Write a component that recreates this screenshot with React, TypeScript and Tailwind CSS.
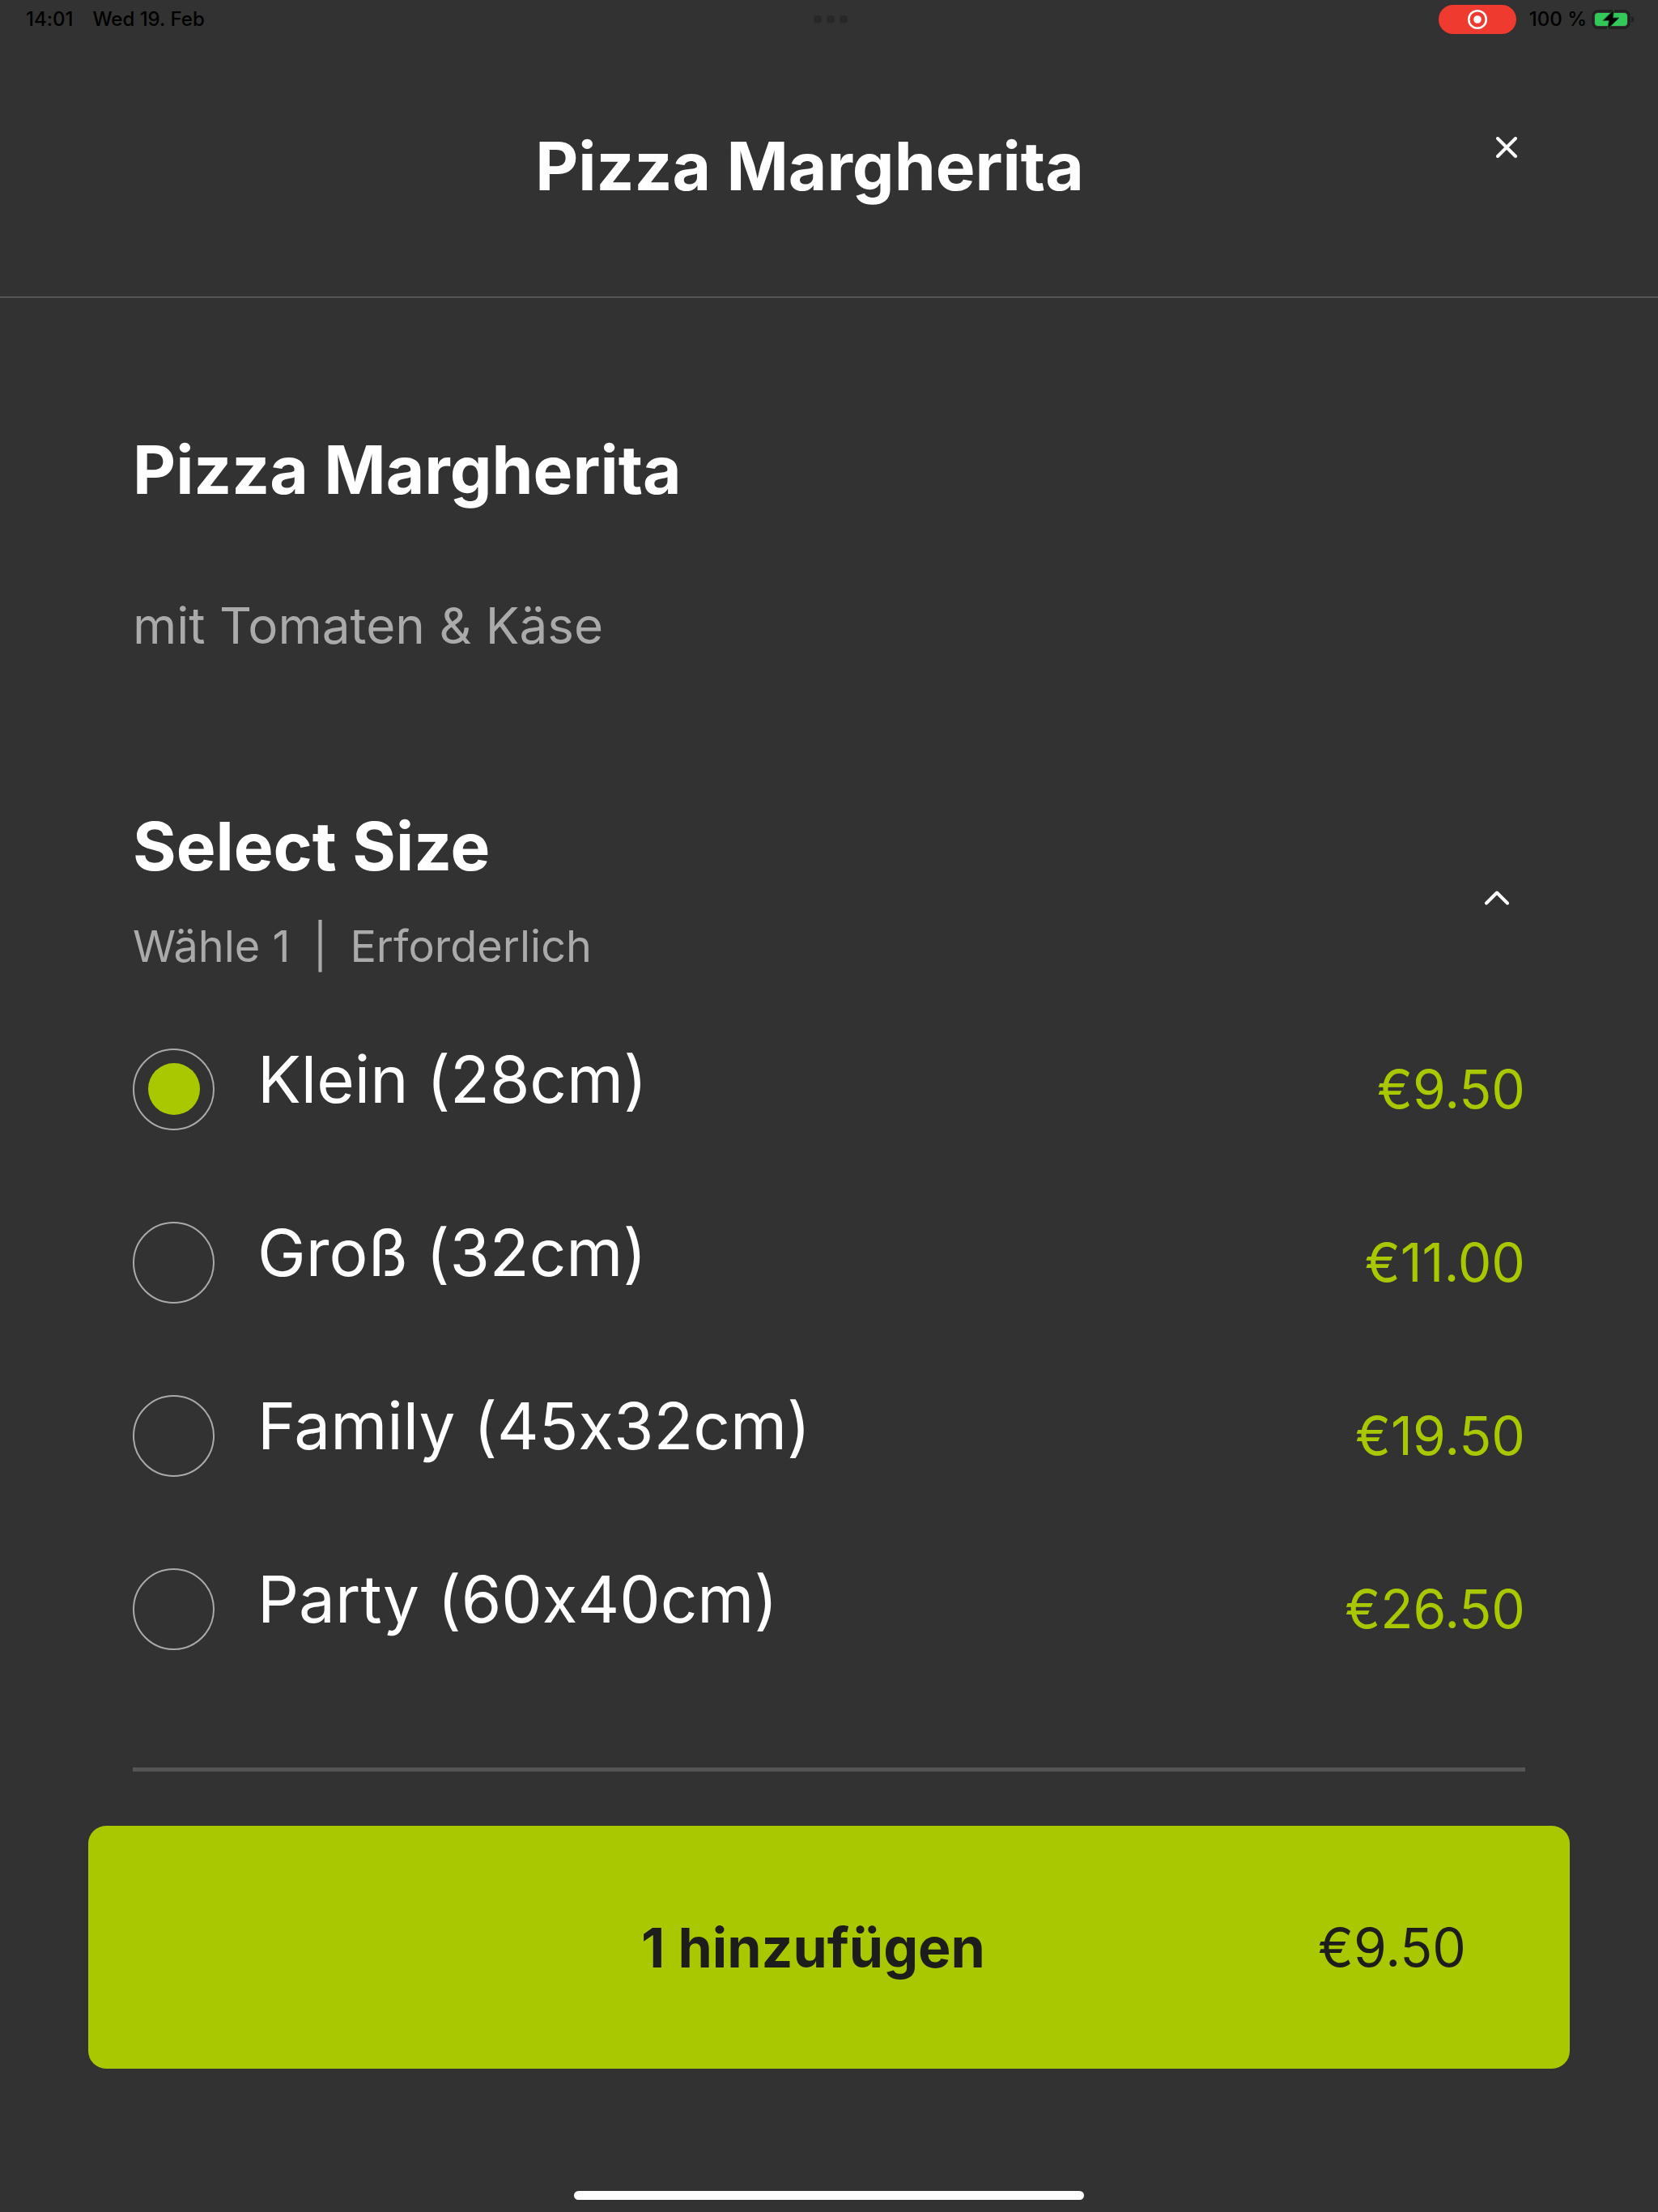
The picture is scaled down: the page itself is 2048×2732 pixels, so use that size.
import { useState } from 'react'

interface SizeOption {
  id: string
  label: string
  price: number
}

const sizes: SizeOption[] = [
  { id: 'small', label: 'Klein (28cm)', price: 9.5 },
  { id: 'large', label: 'Groß (32cm)', price: 11 },
  { id: 'family', label: 'Family (45x32cm)', price: 19.5 },
  { id: 'party', label: 'Party (60x40cm)', price: 26.5 },
]

const formatPrice = (value: number) => `€${value.toFixed(2)}`

function StatusBar() {
  return (
    <div className="grid h-12 grid-cols-[1fr_auto_1fr] items-center pr-7 pl-8 text-[24px] leading-8 font-medium text-black">
      <div className="flex gap-6">
        <span>14:01</span>
        <span>Wed 19. Feb</span>
      </div>
      <div className="flex justify-center gap-1.5">
        <span className="size-2.5 rounded-full bg-[#282828]" />
        <span className="size-2.5 rounded-full bg-[#282828]" />
        <span className="size-2.5 rounded-full bg-[#282828]" />
      </div>
      <div className="flex items-center justify-end">
        <span className="mr-4 flex h-9 w-24 items-center justify-center rounded-full bg-[#ee3a2f]">
          <svg viewBox="0 0 26 26" className="size-[26px]" aria-hidden="true">
            <circle cx="13" cy="13" r="10.8" fill="none" stroke="#fff" strokeWidth="2.6" />
            <circle cx="13" cy="13" r="4.8" fill="#fff" />
          </svg>
        </span>
        <span className="mr-1.5">100 %</span>
        <svg viewBox="0 0 54 26" className="h-[26px] w-[54px]" aria-hidden="true">
          <rect x="1.5" y="2.5" width="45" height="21" rx="6.5" fill="none" stroke="#1f1f1f" strokeWidth="2.4" />
          <rect x="4" y="5" width="40" height="16" rx="4" fill="#34c759" />
          <path d="M49 9.5c2.2.6 3.6 1.8 3.6 3.5s-1.4 2.9-3.6 3.5z" fill="#1f1f1f" />
          <path
            d="M27.5 1 14 14.5h7.5L19.5 25 34 11h-7.5z"
            fill="#000"
            stroke="#1f5c30"
            strokeWidth="1"
            strokeLinejoin="round"
          />
        </svg>
      </div>
    </div>
  )
}

export default function App() {
  const [selectedId, setSelectedId] = useState('small')
  const [open, setOpen] = useState(true)
  const selected = sizes.find((size) => size.id === selectedId) ?? sizes[0]

  return (
    <div className="flex min-h-screen flex-col bg-[#323232] font-['Inter',sans-serif] text-white [font-feature-settings:'calt'_0]">
      <StatusBar />

      <header className="flex items-start border-b-2 border-[#555] pt-[84px] pr-[137px] pb-[110px] pl-[189px]">
        <h1 className="flex-1 pt-6 text-center text-[82px] leading-[100px] font-bold">Pizza Margherita</h1>
        <button type="button" aria-label="Schließen" className="flex size-[100px] items-center justify-center">
          <svg viewBox="0 0 26 26" className="size-[26px]" fill="none" stroke="currentColor" strokeWidth="4" strokeLinecap="round">
            <path d="M2 2l22 22M24 2L2 24" />
          </svg>
        </button>
      </header>

      <main className="px-[164px] pt-[163px]">
        <h2 className="text-[82px] leading-[100px] font-bold">Pizza Margherita</h2>
        <p className="mt-[102px] text-[62px] leading-[80px] text-[#aaa]">mit Tomaten &amp; Käse</p>

        <section className="mt-[183px] border-b-[5px] border-[#555] pb-[134px]">
          <button
            type="button"
            aria-expanded={open}
            onClick={() => setOpen(!open)}
            className="flex w-full items-center justify-between text-left"
          >
            <span>
              <span className="block text-[82px] leading-[100px] font-bold">Select Size</span>
              <span className="mt-[37px] flex gap-7 text-[54px] leading-[72px] text-[#aaa]">
                <span>Wähle 1</span>
                <span>|</span>
                <span>Erforderlich</span>
              </span>
            </span>
            <span className="flex w-[70px] justify-center pt-4">
              <svg viewBox="0 0 30 18" className="h-[18px] w-[30px]" fill="none" stroke="currentColor" strokeWidth="4" strokeLinecap="round" strokeLinejoin="round">
                <path d="M2 15.5L15 2.5l13 13" />
              </svg>
            </span>
          </button>

          {open && (
            <div role="radiogroup" aria-label="Select Size" className="mt-[78px] flex flex-col gap-[90px]">
              {sizes.map((size) => (
                <label key={size.id} className="flex items-center">
                  <input
                    type="radio"
                    name="size"
                    checked={size.id === selectedId}
                    onChange={() => setSelectedId(size.id)}
                    className="grid size-[101px] shrink-0 appearance-none place-items-center rounded-full border-2 border-[#aaa] before:size-16 before:rounded-full checked:before:bg-[#aac800]"
                  />
                  <span className="flex-1 pb-6 pl-[53px] text-[80px] leading-[100px]">{size.label}</span>
                  <span className="text-[66px] leading-[80px] text-[#aac800]">{formatPrice(size.price)}</span>
                </label>
              ))}
            </div>
          )}
        </section>
      </main>

      <div className="px-[109px] pt-[67px] pb-[150px]">
        <button
          type="button"
          className="flex w-full items-center rounded-[22px] bg-[#aac800] py-[110px] pr-32 pl-[272px] text-[#1d1d1b]"
        >
          <span className="flex-1 text-center text-[68px] leading-[80px] font-bold">1 hinzufügen</span>
          <span className="text-[66px] leading-[80px]">{formatPrice(selected.price)}</span>
        </button>
      </div>

      <div className="mx-auto mt-auto mb-[15px] h-[11px] w-[630px] rounded-full bg-white" />
    </div>
  )
}
